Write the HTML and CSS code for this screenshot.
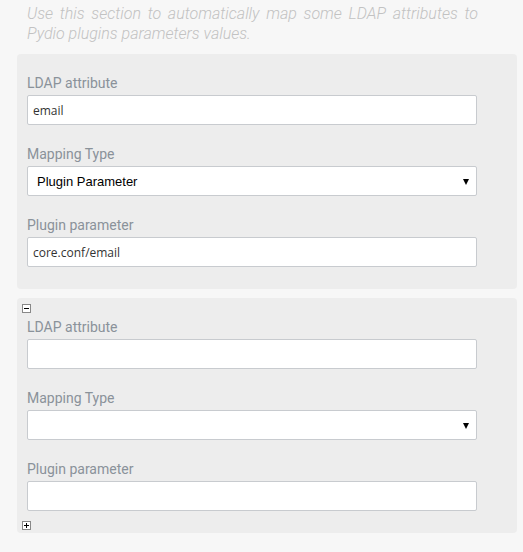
FILE: index.html
```html
<!DOCTYPE html>
<html>
<head>
<meta charset="utf-8">
<link rel="stylesheet" href="styles.css">
</head>
<body>
<div class="page">
  <p class="legend">Use this section to automatically map some LDAP attributes to Pydio plugins parameters values.</p>

  <div class="panel">
    <div class="panel-top"></div>
    <div class="field">
      <label class="label">LDAP attribute</label>
      <input class="input" type="text" value="email">
    </div>
    <div class="field">
      <label class="label">Mapping Type</label>
      <div class="select">
        <span class="select-value">Plugin Parameter</span>
        <span class="arrow"></span>
      </div>
    </div>
    <div class="field">
      <label class="label">Plugin parameter</label>
      <input class="input" type="text" value="core.conf/email">
    </div>
    <div class="panel-bottom"></div>
  </div>

  <div class="panel">
    <div class="panel-top">
      <span class="toggle">
        <svg width="9" height="9" viewBox="0 0 9 9"><rect x="0.5" y="0.5" width="8" height="8" fill="#fff" stroke="#888"/><rect x="2" y="4" width="5" height="1" fill="#000"/></svg>
      </span>
    </div>
    <div class="field">
      <label class="label">LDAP attribute</label>
      <input class="input" type="text" value="">
    </div>
    <div class="field">
      <label class="label">Mapping Type</label>
      <div class="select">
        <span class="select-value"></span>
        <span class="arrow"></span>
      </div>
    </div>
    <div class="field">
      <label class="label">Plugin parameter</label>
      <input class="input" type="text" value="">
    </div>
    <div class="panel-bottom">
      <span class="toggle">
        <svg width="9" height="9" viewBox="0 0 9 9"><rect x="0.5" y="0.5" width="8" height="8" fill="#fff" stroke="#888"/><rect x="2" y="4" width="5" height="1" fill="#000"/><rect x="4" y="2" width="1" height="5" fill="#000"/></svg>
      </span>
    </div>
  </div>
</div>
</body>
</html>
```

FILE: styles.css
```css
html, body {
  margin: 0;
  padding: 0;
  background: #f7f7f7;
}
.page {
  width: 523px;
  height: 552px;
  padding: 4px 6px 0 17px;
  box-sizing: border-box;
  font-family: Roboto, "Liberation Sans", sans-serif;
}
.legend {
  margin: 0 39px 10px 10px;
  font-size: 16px;
  line-height: 20px;
  font-weight: 300;
  font-style: italic;
  color: #c2c2c2;
  text-align: justify;
}
.panel {
  width: 500px;
  background: #ededed;
  border-radius: 4px;
  margin-bottom: 9px;
  padding-left: 10px;
  box-sizing: border-box;
}
.panel-top {
  height: 19px;
  padding-top: 6px;
  box-sizing: border-box;
  margin-left: -5px;
}
.panel-bottom {
  height: 22px;
  padding-top: 10px;
  box-sizing: border-box;
  margin-left: -5px;
}
.toggle {
  display: block;
  width: 9px;
  height: 9px;
}
.toggle svg {
  display: block;
}
.field {
  display: flex;
  flex-direction: column;
}
.field + .field {
  margin-top: 19px;
}
.label {
  display: block;
  font-size: 14px;
  line-height: 20px;
  color: #8a929a;
  margin-bottom: 2px;
}
.input {
  display: block;
  width: 450px;
  height: 30px;
  box-sizing: border-box;
  margin: 0;
  padding: 0 5px;
  border: 1px solid #c8cbcf;
  border-radius: 2px;
  background: #fff;
  font-family: "Open Sans", sans-serif;
  font-size: 12px;
  color: #333;
  outline: none;
}
.select {
  position: relative;
  width: 450px;
  height: 30px;
  box-sizing: border-box;
  border: 1px solid #c8cbcf;
  border-radius: 2px;
  background: #fff;
  display: flex;
  align-items: center;
  padding-left: 9px;
}
.select-value {
  font-family: "Liberation Sans", Arial, sans-serif;
  font-size: 13px;
  color: #000;
}
.arrow {
  position: absolute;
  right: 7px;
  top: 12px;
  width: 0;
  height: 0;
  border-left: 3.5px solid transparent;
  border-right: 3.5px solid transparent;
  border-top: 6px solid #000;
}
```
